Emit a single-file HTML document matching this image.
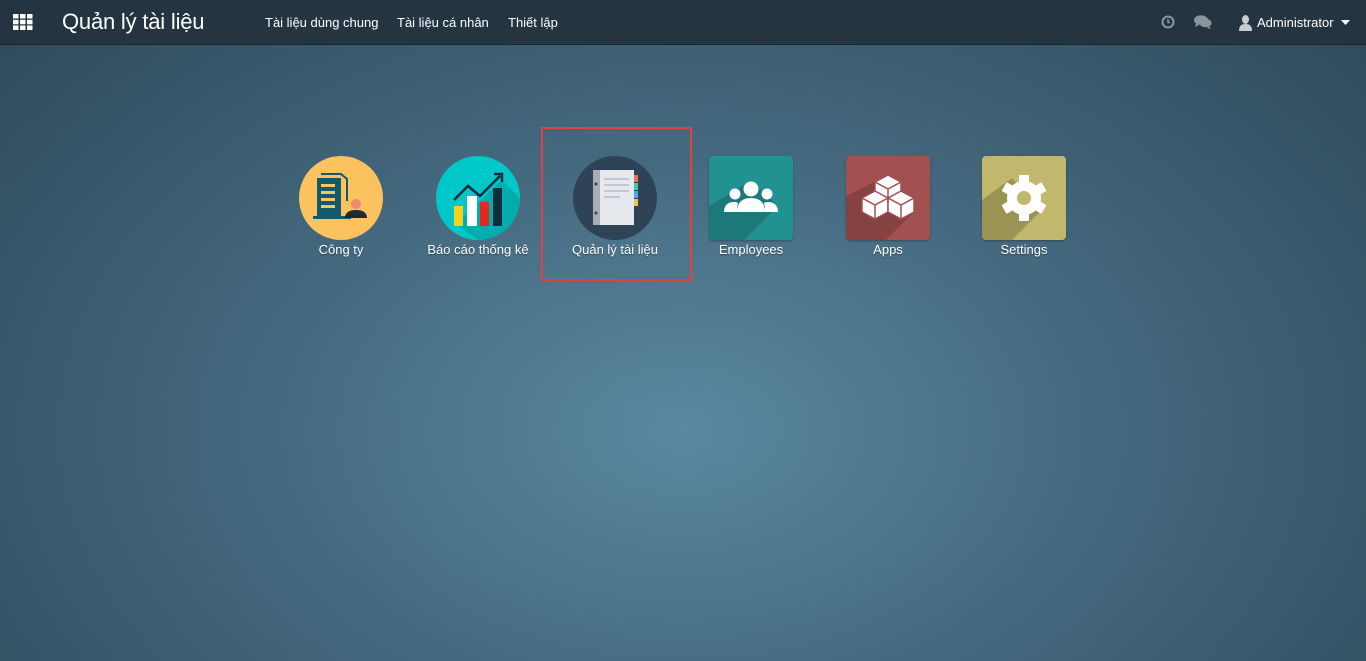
<!DOCTYPE html>
<html><head><meta charset="utf-8"><style>
*{margin:0;padding:0;box-sizing:border-box}
body{width:1366px;height:661px;overflow:hidden;font-family:"Liberation Sans",sans-serif;background:radial-gradient(ellipse 900px 600px at 683px 430px,#5a88a1 0%,#456a80 45%,#2f4a5b 100%);position:relative}
.nav{position:absolute;left:0;top:0;width:1366px;height:45px;background:#243441;border-bottom:1px solid #1a252f;color:#fff}
.nav .t{position:absolute;top:0;line-height:45px;white-space:nowrap}
.app{position:absolute;top:156px;width:84px;height:84px}
.lbl{position:absolute;top:242px;width:150px;text-align:center;color:#fff;font-size:13px;text-shadow:0 1px 1px rgba(0,0,0,.4)}
.sq{border-radius:4px;overflow:hidden;box-shadow:0 1px 2px rgba(0,0,0,.3)}
</style></head><body>
<div class="nav">
<svg style="position:absolute;left:13px;top:14px" width="20" height="16" viewBox="0 0 20 16" fill="#fff">
<rect x="0" y="0" width="5.5" height="4.5"/><rect x="7" y="0" width="5.5" height="4.5"/><rect x="14" y="0" width="5.5" height="4.5"/>
<rect x="0" y="5.8" width="5.5" height="4.5"/><rect x="7" y="5.8" width="5.5" height="4.5"/><rect x="14" y="5.8" width="5.5" height="4.5"/>
<rect x="0" y="11.5" width="5.5" height="4.5"/><rect x="7" y="11.5" width="5.5" height="4.5"/><rect x="14" y="11.5" width="5.5" height="4.5"/></svg>
<div class="t" style="left:62px;font-size:22px;top:-1px;letter-spacing:-0.2px">Quản lý tài liệu</div>
<div class="t" style="left:265px;font-size:13px">Tài liệu dùng chung</div>
<div class="t" style="left:397px;font-size:13px">Tài liệu cá nhân</div>
<div class="t" style="left:508px;font-size:13px">Thiết lập</div>
<svg style="position:absolute;left:1161px;top:15px" width="14" height="14" viewBox="0 0 14 14"><circle cx="7" cy="7" r="6.5" fill="#8c959d"/><circle cx="7" cy="7" r="4.5" fill="#243441"/><path d="M7 4v3.5h2" stroke="#8c959d" stroke-width="1.5" fill="none"/></svg>
<svg style="position:absolute;left:1194px;top:15px" width="18" height="14" viewBox="0 0 18 14" fill="#8c959d"><ellipse cx="7" cy="5" rx="7" ry="4.8"/><ellipse cx="11.5" cy="8" rx="6" ry="4.2"/><path d="M2 8l-1 4 4-2z"/><path d="M15 11l2 3-4-1z"/></svg>
<svg style="position:absolute;left:1239px;top:15px" width="13" height="16" viewBox="0 0 13 16" fill="#c8ccd0"><ellipse cx="6.5" cy="4.5" rx="3.5" ry="4.5"/><path d="M0 16c0-5 2-7 6.5-7S13 11 13 16z"/></svg>
<div class="t" style="left:1257px;font-size:13px">Administrator</div>
<svg style="position:absolute;left:1341px;top:20px" width="9" height="5"><path d="M0 0h9L4.5 5z" fill="#fff"/></svg>
</div>

<svg class="app" style="left:299px" viewBox="0 0 84 84"><circle cx="42" cy="42" r="42" fill="#fbc25e"/>
<path d="M22 18h20l6 5v22" stroke="#125a6e" stroke-width="2" fill="none"/>
<rect x="18" y="22" width="24" height="38" fill="#125a6e"/>
<g fill="#fbc25e"><rect x="22" y="28" width="14" height="3"/><rect x="22" y="35" width="14" height="3"/><rect x="22" y="42" width="14" height="3"/><rect x="22" y="49" width="14" height="3"/></g>
<rect x="14" y="60" width="38" height="3" fill="#125a6e"/>
<circle cx="57" cy="48" r="5" fill="#f08a6e"/><path d="M46 62c0-6 5-8 11-8s11 2 11 8z" fill="#1d2b36"/></svg>
<div class="lbl" style="left:266px">Công ty</div>

<svg class="app" style="left:436px" viewBox="0 0 84 84"><circle cx="42" cy="42" r="42" fill="#00c8c8"/>
<path d="M42 84A42 42 0 0 0 84 42L66 24 20 68z" fill="#00adad"/>
<rect x="18" y="50" width="9" height="20" fill="#f6d31b"/><rect x="31" y="40" width="10" height="30" fill="#fff"/><rect x="44" y="46" width="9" height="24" fill="#e8261c"/><rect x="57" y="32" width="9" height="38" fill="#0e2c3d"/>
<path d="M18 44l14-14 12 10 20-20" stroke="#0e2c3d" stroke-width="2.5" fill="none"/><path d="M58 18h8v8" stroke="#0e2c3d" stroke-width="2.5" fill="none"/></svg>
<div class="lbl" style="left:403px">Báo cáo thống kê</div>

<div style="position:absolute;left:541px;top:127px;width:151px;height:154px;border:2px solid #e2413f"></div>
<svg class="app" style="left:573px" viewBox="0 0 84 84"><circle cx="42" cy="42" r="42" fill="#2e4356"/>
<rect x="20" y="14" width="8" height="55" fill="#a7adb5"/><rect x="27" y="14" width="34" height="55" fill="#e6e9ee"/>
<circle cx="23" cy="28" r="1.5" fill="#3a4652"/><circle cx="23" cy="57" r="1.5" fill="#3a4652"/>
<g fill="#c3c8d0"><rect x="31" y="22" width="25" height="2"/><rect x="31" y="28" width="25" height="2"/><rect x="31" y="34" width="25" height="2"/><rect x="31" y="40" width="16" height="2"/></g>
<rect x="61" y="19" width="4" height="7" fill="#f06e5a"/><rect x="61" y="27" width="4" height="7" fill="#45c9a3"/><rect x="61" y="35" width="4" height="7" fill="#4fa8e8"/><rect x="61" y="43" width="4" height="7" fill="#f3c54e"/></svg>
<div class="lbl" style="left:540px">Quản lý tài liệu</div>

<svg class="app sq" style="left:709px" viewBox="0 0 84 84"><rect width="84" height="84" fill="#229191"/>
<path d="M0 50L42 25 69 50 35 84H0z" fill="#1c7474" opacity=".85"/>
<g fill="#fff"><circle cx="42" cy="33" r="7.5"/><path d="M28 56c0-10 6-14 14-14s14 4 14 14z"/><circle cx="26" cy="38" r="5.5"/><path d="M15 56c0-7 4-10 10-10 3 0 4 1 4 1-1 3-1 6-1 9z"/><circle cx="58" cy="38" r="5.5"/><path d="M69 56c0-7-4-10-10-10-3 0-4 1-4 1 1 3 1 6 1 9z"/></g></svg>
<div class="lbl" style="left:676px">Employees</div>

<svg class="app sq" style="left:846px" viewBox="0 0 84 84"><rect width="84" height="84" fill="#a25050"/>
<path d="M0 40L29 26 42 19 68 56 40 84H0z" fill="#7c3c3c" opacity=".75"/>
<g fill="#fff" stroke="#a25050" stroke-width="1.5" stroke-linejoin="round">
<path d="M29 26l13-7 13 7v14l-13 7-13-7z"/><path d="M16 42l13-7 13 7v14l-13 7-13-7z"/><path d="M42 42l13-7 13 7v14l-13 7-13-7z"/></g>
<g stroke="#a25050" stroke-width="1.5" fill="none"><path d="M29 26l13 7 13-7M42 33v14M16 42l13 7 13-7M29 49v14M42 42l13 7 13-7M55 49v14"/></g></svg>
<div class="lbl" style="left:813px">Apps</div>

<svg class="app sq" style="left:982px" viewBox="0 0 84 84"><rect width="84" height="84" fill="#c2b86d"/>
<path d="M0 44L30 22 58 56 30 84H0z" fill="#948c50" opacity=".85"/>
<g transform="translate(42 42)" fill="#fff"><circle r="17"/>
<g id="t"><rect x="-5" y="-23" width="10" height="10" rx="1"/></g>
<use href="#t" transform="rotate(60)"/><use href="#t" transform="rotate(120)"/><use href="#t" transform="rotate(180)"/><use href="#t" transform="rotate(240)"/><use href="#t" transform="rotate(300)"/>
<circle r="7" fill="#c2b86d"/></g></svg>
<div class="lbl" style="left:949px">Settings</div>
</body></html>
